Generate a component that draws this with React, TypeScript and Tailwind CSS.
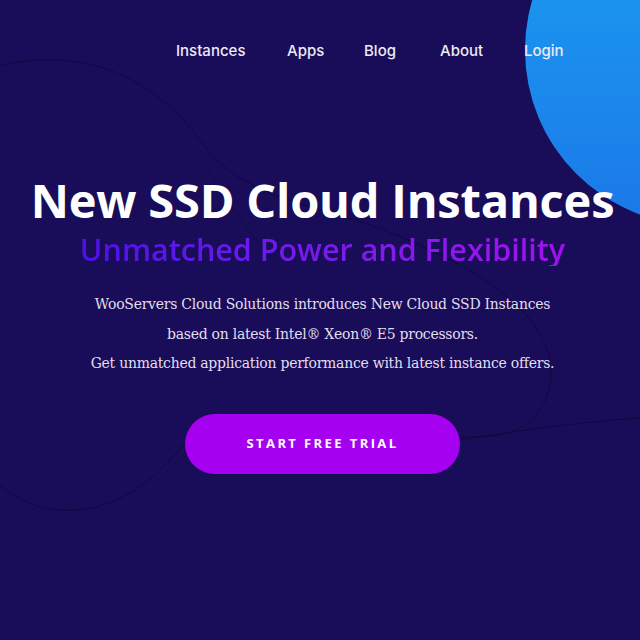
import React from "react";

export default function App() {
  return (
    <div className="relative w-[640px] h-[640px] overflow-hidden bg-[#190c58]">
      <div className="absolute w-[350px] h-[350px] rounded-full left-[525px] top-[-125px] bg-gradient-to-b from-[#1ea2f2] to-[#1c78e8]" />
      <svg className="absolute left-0 top-0" width="640" height="640" viewBox="0 0 640 640" fill="none">
        <path d="M0 66 C60 50 140 60 200 140 C250 210 330 200 430 250 C540 300 570 360 540 410 C510 450 470 430 450 440" stroke="#110842" strokeWidth="1" />
        <path d="M0 485 C40 520 110 525 170 460 C180 450 185 442 190 440" stroke="#110842" strokeWidth="1" />
        <path d="M460 440 C520 430 600 420 640 418" stroke="#110842" strokeWidth="1" />
        <path d="M200 160 C230 200 250 240 300 290" stroke="#150a4c" strokeWidth="1" />
      </svg>
      <div className="relative flex flex-col">
        <nav className="flex w-full pl-[176px] pt-[40px] h-[62px] text-[15px] font-medium text-[#ecebf6] font-['Inter',sans-serif]">
          <span className="w-[111px]">Instances</span>
          <span className="w-[77px]">Apps</span>
          <span className="w-[76px]">Blog</span>
          <span className="w-[84px]">About</span>
          <span>Login</span>
        </nav>
        <div className="flex flex-col items-center pl-[5px]">
          <h1 className="mt-[114px] text-[47px] leading-[48px] font-bold text-white font-['Open_Sans',sans-serif] tracking-[-0.2px]">
            New SSD Cloud Instances
          </h1>
          <h2 className="mt-[8px] text-[30.5px] leading-[34px] font-semibold font-['Open_Sans',sans-serif] bg-gradient-to-r from-[#4b10e8] to-[#a20ff0] bg-clip-text text-transparent">
            Unmatched Power and Flexibility
          </h2>
          <p className="mt-[24px] text-center text-[14px] leading-[29.5px] text-[#e2def0] font-['DejaVu_Serif','Liberation_Serif',serif] tracking-[-0.27px]">
            WooServers Cloud Solutions introduces New Cloud SSD Instances
            <br />
            based on latest Intel® Xeon® E5 processors.
            <br />
            Get unmatched application performance with latest instance offers.
          </p>
          <button className="mt-[35px] w-[275px] h-[60px] rounded-full bg-[#a600f0] text-white text-[13px] font-bold tracking-[2.4px] font-['Open_Sans',sans-serif]">
            START FREE TRIAL
          </button>
        </div>
      </div>
    </div>
  );
}
